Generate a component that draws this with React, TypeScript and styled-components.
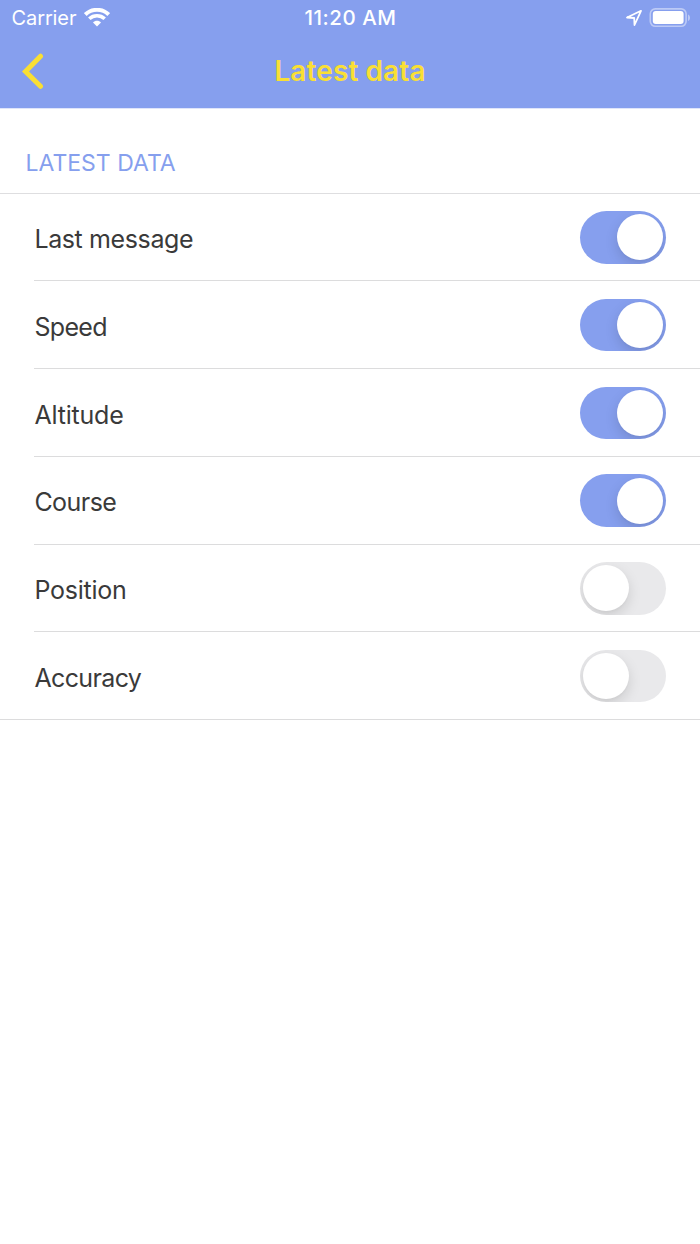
import React, { useState } from 'react';
import styled, { createGlobalStyle } from 'styled-components';

const BLUE = '#869fee';
const YELLOW = '#f9df34';

const GlobalStyle = createGlobalStyle`
  * { box-sizing: border-box; }
  body {
    margin: 0;
    background: #fff;
    font-family: Inter, "Liberation Sans", sans-serif;
  }
`;

const Screen = styled.div`
  width: 100%;
  min-height: 1244px;
  background: #fff;
`;

const Header = styled.header`
  height: 109px;
  border-bottom: 1px solid #dfe5fa;
  background: ${BLUE};
`;

const StatusBar = styled.div`
  display: grid;
  grid-template-columns: 1fr auto 1fr;
  align-items: center;
  height: 35px;
  color: #fff;
  font-size: 20px;
`;

const Carrier = styled.div`
  display: flex;
  align-items: center;
  gap: 8px;
  padding-left: 11.5px;
`;

const CarrierName = styled.span`
  letter-spacing: -0.1px;
  padding-top: 1px;
`;

const Time = styled.time`
  font-size: 20.5px;
  font-weight: 500;
  letter-spacing: 0.5px;
  padding-left: 1px;
`;

const StatusIcons = styled.div`
  display: flex;
  align-items: center;
  justify-content: flex-end;
  gap: 6px;
  padding-right: 9.5px;
`;

const NavBar = styled.nav`
  display: grid;
  grid-template-columns: 1fr auto 1fr;
  align-items: center;
  height: 73px;
`;

const BackButton = styled.button`
  display: flex;
  width: 44px;
  margin-left: 19.5px;
  padding: 0;
  border: 0;
  background: none;
`;

const Title = styled.h1`
  margin: 0;
  color: ${YELLOW};
  font-size: 28px;
  font-weight: 600;
  letter-spacing: 0.1px;
  line-height: 73px;
`;

const SectionTitle = styled.h2`
  height: 83.6px;
  margin: 0;
  padding: 39px 25.5px 0;
  color: ${BLUE};
  font-size: 23px;
  font-weight: 400;
  line-height: 31px;
`;

const List = styled.ul`
  margin: 0;
  padding: 0;
  list-style: none;
  border-top: 1px solid #dedee0;
  border-bottom: 1px solid #dcdcdd;
`;

const Row = styled.li`
  display: flex;
  align-items: center;
  justify-content: space-between;
  height: 87.75px;
  margin-left: 34px;
  padding-right: 34px;
  border-bottom: 1px solid #dcdcdd;
  color: #3a3a3a;
  font-size: 25px;

  &:last-child {
    height: 86.75px;
    border-bottom: 0;
  }
`;

const Label = styled.span<{ $tracking: number }>`
  padding: 4.5px 0 0 0.4px;
  letter-spacing: ${({ $tracking }) => $tracking}px;
`;

const Track = styled.button<{ $on: boolean }>`
  display: flex;
  justify-content: ${({ $on }) => ($on ? 'flex-end' : 'flex-start')};
  width: 86.3px;
  height: 52.5px;
  margin-top: 0.8px;
  padding: 3.2px;
  border: 0;
  border-radius: 27px;
  overflow: hidden;
  background: ${({ $on }) => ($on ? BLUE : '#e9e9eb')};
`;

const Knob = styled.span`
  width: 46px;
  height: 46px;
  border-radius: 50%;
  background: #fff;
  box-shadow: 0 5px 13px rgba(0, 0, 0, 0.13), 0 2px 2px rgba(0, 0, 0, 0.02);
`;

const WifiIcon = () => (
  <svg width="26" height="19" viewBox="0 0 26 19" fill="none" stroke="#fff">
    <path d="M1.3 6.5C7.8.2 18.2.2 24.7 6.5" strokeWidth="3.9" />
    <path d="M5.3 10.8c4.3-4 11.1-4 15.4 0" strokeWidth="3.6" />
    <path d="M9 14.4c2.1-2.3 5.9-2.3 8 0l-4 4z" fill="#fff" stroke="none" />
  </svg>
);

const LocationIcon = () => (
  <svg width="18" height="18" viewBox="0 0 18 18" fill="none" stroke="#fff" strokeWidth="1.8" strokeLinejoin="round">
    <path d="M16 1.8 2 8.5l7.2.5.3 7z" />
  </svg>
);

const BatteryIcon = () => (
  <svg width="42" height="20" viewBox="0 0 42 20">
    <rect x="1.3" y=".9" width="35.8" height="17.4" rx="5" fill="none" stroke="#fff" strokeOpacity=".45" strokeWidth="1.6" />
    <rect x="3.8" y="3.1" width="30.8" height="13" rx="3" fill="#fff" />
    <path d="M39.1 6.4c2.4 1.2 2.4 5.4 0 6.6z" fill="#fff" fillOpacity=".5" />
  </svg>
);

const BackIcon = () => (
  <svg width="24" height="38" viewBox="0 0 24 38" fill="none" stroke={YELLOW} strokeWidth="5" strokeLinecap="round" strokeLinejoin="miter">
    <path d="M20.5 3.2 5.5 18.5l15 14.8" />
  </svg>
);

const items = [
  { label: 'Last message', on: true, tracking: -0.38 },
  { label: 'Speed', on: true, tracking: -0.65 },
  { label: 'Altitude', on: true, tracking: -0.2 },
  { label: 'Course', on: true, tracking: -0.55 },
  { label: 'Position', on: false, tracking: -0.25 },
  { label: 'Accuracy', on: false, tracking: -0.63 },
];

export default function App() {
  const [enabled, setEnabled] = useState(items.map((item) => item.on));
  const toggle = (index: number) =>
    setEnabled((prev) => prev.map((value, i) => (i === index ? !value : value)));

  return (
    <Screen>
      <GlobalStyle />
      <Header>
        <StatusBar>
          <Carrier>
            <CarrierName>Carrier</CarrierName>
            <WifiIcon />
          </Carrier>
          <Time>11:20 AM</Time>
          <StatusIcons>
            <LocationIcon />
            <BatteryIcon />
          </StatusIcons>
        </StatusBar>
        <NavBar>
          <BackButton aria-label="Back">
            <BackIcon />
          </BackButton>
          <Title>Latest data</Title>
        </NavBar>
      </Header>
      <SectionTitle>LATEST DATA</SectionTitle>
      <List>
        {items.map((item, index) => (
          <Row key={item.label}>
            <Label $tracking={item.tracking}>{item.label}</Label>
            <Track
              role="switch"
              aria-checked={enabled[index]}
              aria-label={item.label}
              $on={enabled[index]}
              onClick={() => toggle(index)}
            >
              <Knob />
            </Track>
          </Row>
        ))}
      </List>
    </Screen>
  );
}
